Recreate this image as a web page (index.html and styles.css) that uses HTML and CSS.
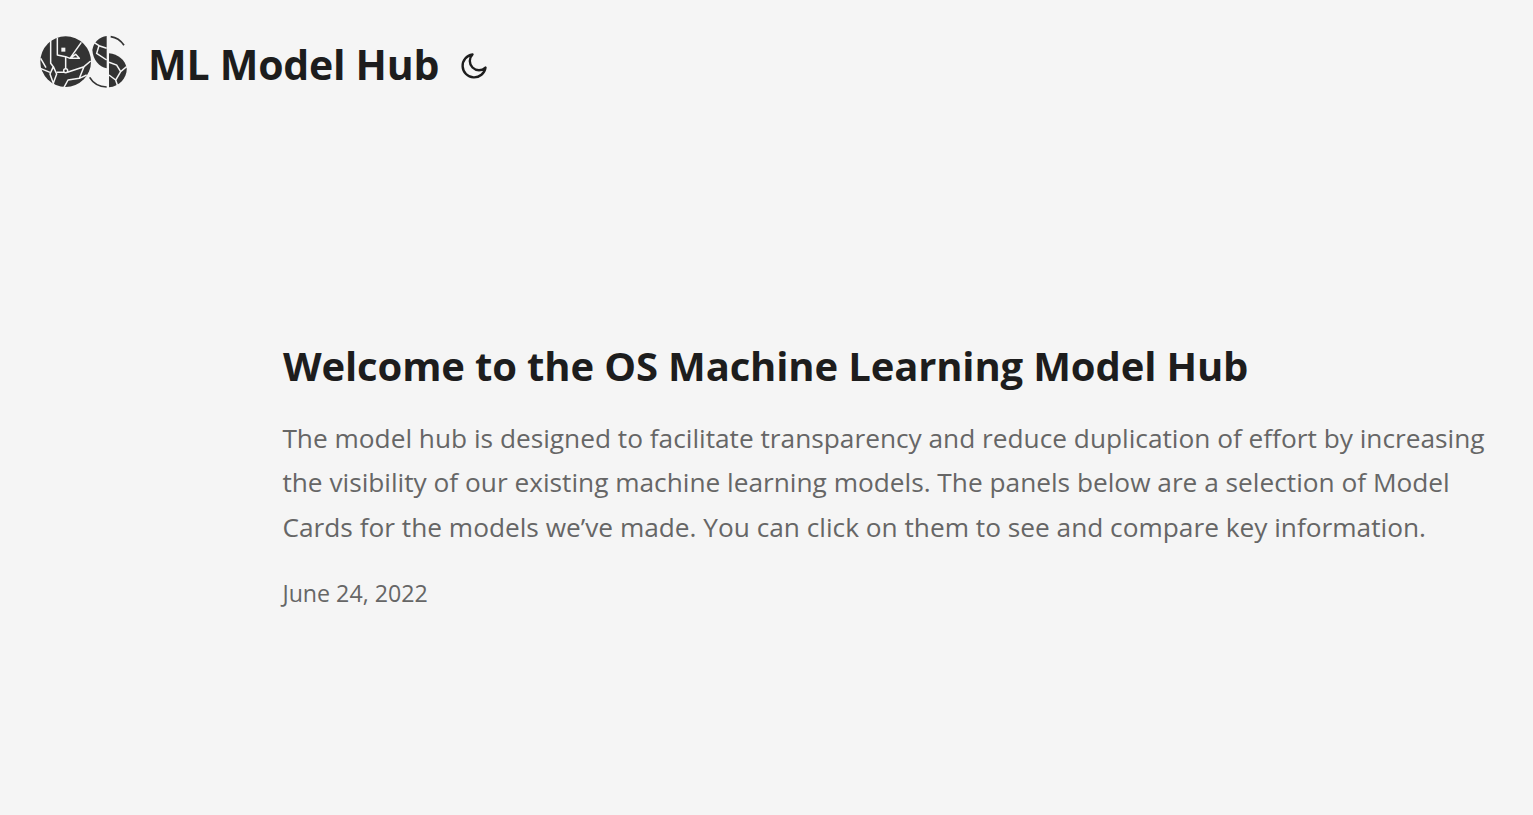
FILE: index.html
```html
<!DOCTYPE html>
<html lang="en">
<head>
<meta charset="utf-8">
<title>ML Model Hub</title>
<link rel="stylesheet" href="styles.css">
</head>
<body>
<header class="nav">
  <svg class="logo" viewBox="28 30 261 165" width="87" height="55" aria-hidden="true">
    <circle cx="105" cy="110" r="76" fill="#333"/>
    <g fill="none" stroke="#f5f5f5" stroke-width="4.5" stroke-linejoin="round">
      <path d="M60 42V115L68 125L58 147L68 175L78 147L68 125M68 175L70 188"/>
      <path d="M80 38V90L105 95V132M105 95L118 100L152 52M118 100L135 88L146 100L118 100"/>
      <path d="M29 130L58 142M78 142H100M110 142L160 125L180 108M160 125L146 160L112 165L100 187M146 160L168 150M30 100L46 128"/>
      <circle cx="105" cy="137" r="6"/>
    </g>
    <rect x="92" y="68" width="12" height="12" fill="#f5f5f5"/>
    <path d="M228 33A50 50 0 0 0 185 75C187 105 205 125 228 130Z" fill="#333"/>
    <g fill="none" stroke="#f5f5f5" stroke-width="4.5">
      <path d="M186 50L205 62L198 85L228 105M205 62L228 70"/>
    </g>
    <path d="M177 157C188 176 206 185 228 186" fill="none" stroke="#333" stroke-width="5"/>
    <path d="M240 35C256 37 270 46 280 61" fill="none" stroke="#333" stroke-width="5"/>
    <path d="M235 85C262 88 284 105 288 130C290 155 268 184 235 187Z" fill="#333"/>
    <g fill="none" stroke="#f5f5f5" stroke-width="4.5">
      <path d="M235 112L258 120L270 140L288 125M270 140L255 165L262 186M235 150L255 165"/>
    </g>
  </svg>
  <span class="brand">ML Model Hub</span>
  <svg class="moon" viewBox="0 0 28 28" width="28" height="28" aria-hidden="true">
    <path d="M25.5 15.5A11.5 11.5 0 1 1 12.5 2.5a9 9 0 0 0 13 13z" fill="none" stroke="#1d1d1d" stroke-width="2.4" stroke-linecap="round" stroke-linejoin="round"/>
  </svg>
</header>
<main class="hero">
  <h1 class="title">Welcome to the OS Machine Learning Model Hub</h1>
  <p class="lead">The model hub is designed to facilitate transparency and reduce duplication of effort by increasing the visibility of our existing machine learning models. The panels below are a selection of Model Cards for the models we’ve made. You can click on them to see and compare key information.</p>
  <p class="date">June 24, 2022</p>
</main>
</body>
</html>
```
FILE: styles.css
```css
* { box-sizing: border-box; }
html, body { margin: 0; height: 100%; }
body {
  background: #f5f5f5;
  color: #1d1d1d;
  font-family: "Open Sans", "Noto Sans", sans-serif;
  overflow: hidden;
}
.nav {
  display: flex;
  align-items: center;
  height: 130px;
  padding-left: 40px;
}
.logo { flex: none; margin: 0 21px 5px 0; }
.brand { font-size: 41px; font-weight: 700; line-height: 1; letter-spacing: -0.25px; margin: 0 21px 2px 0; }
.moon { flex: none; margin-top: 1px; }
.hero { padding: 210px 20px 0 283px; }
.title { margin: 0 0 24px; font-size: 40px; font-weight: 700; line-height: 52px; letter-spacing: -0.14px; }
.lead { margin: -0.3px 0 28.3px -0.6px; font-size: 26.25px; line-height: 44.5px; color: #666; }
.date { margin: 0 0 0 -0.6px; font-size: 23.2px; line-height: 30px; color: #666; }
```
